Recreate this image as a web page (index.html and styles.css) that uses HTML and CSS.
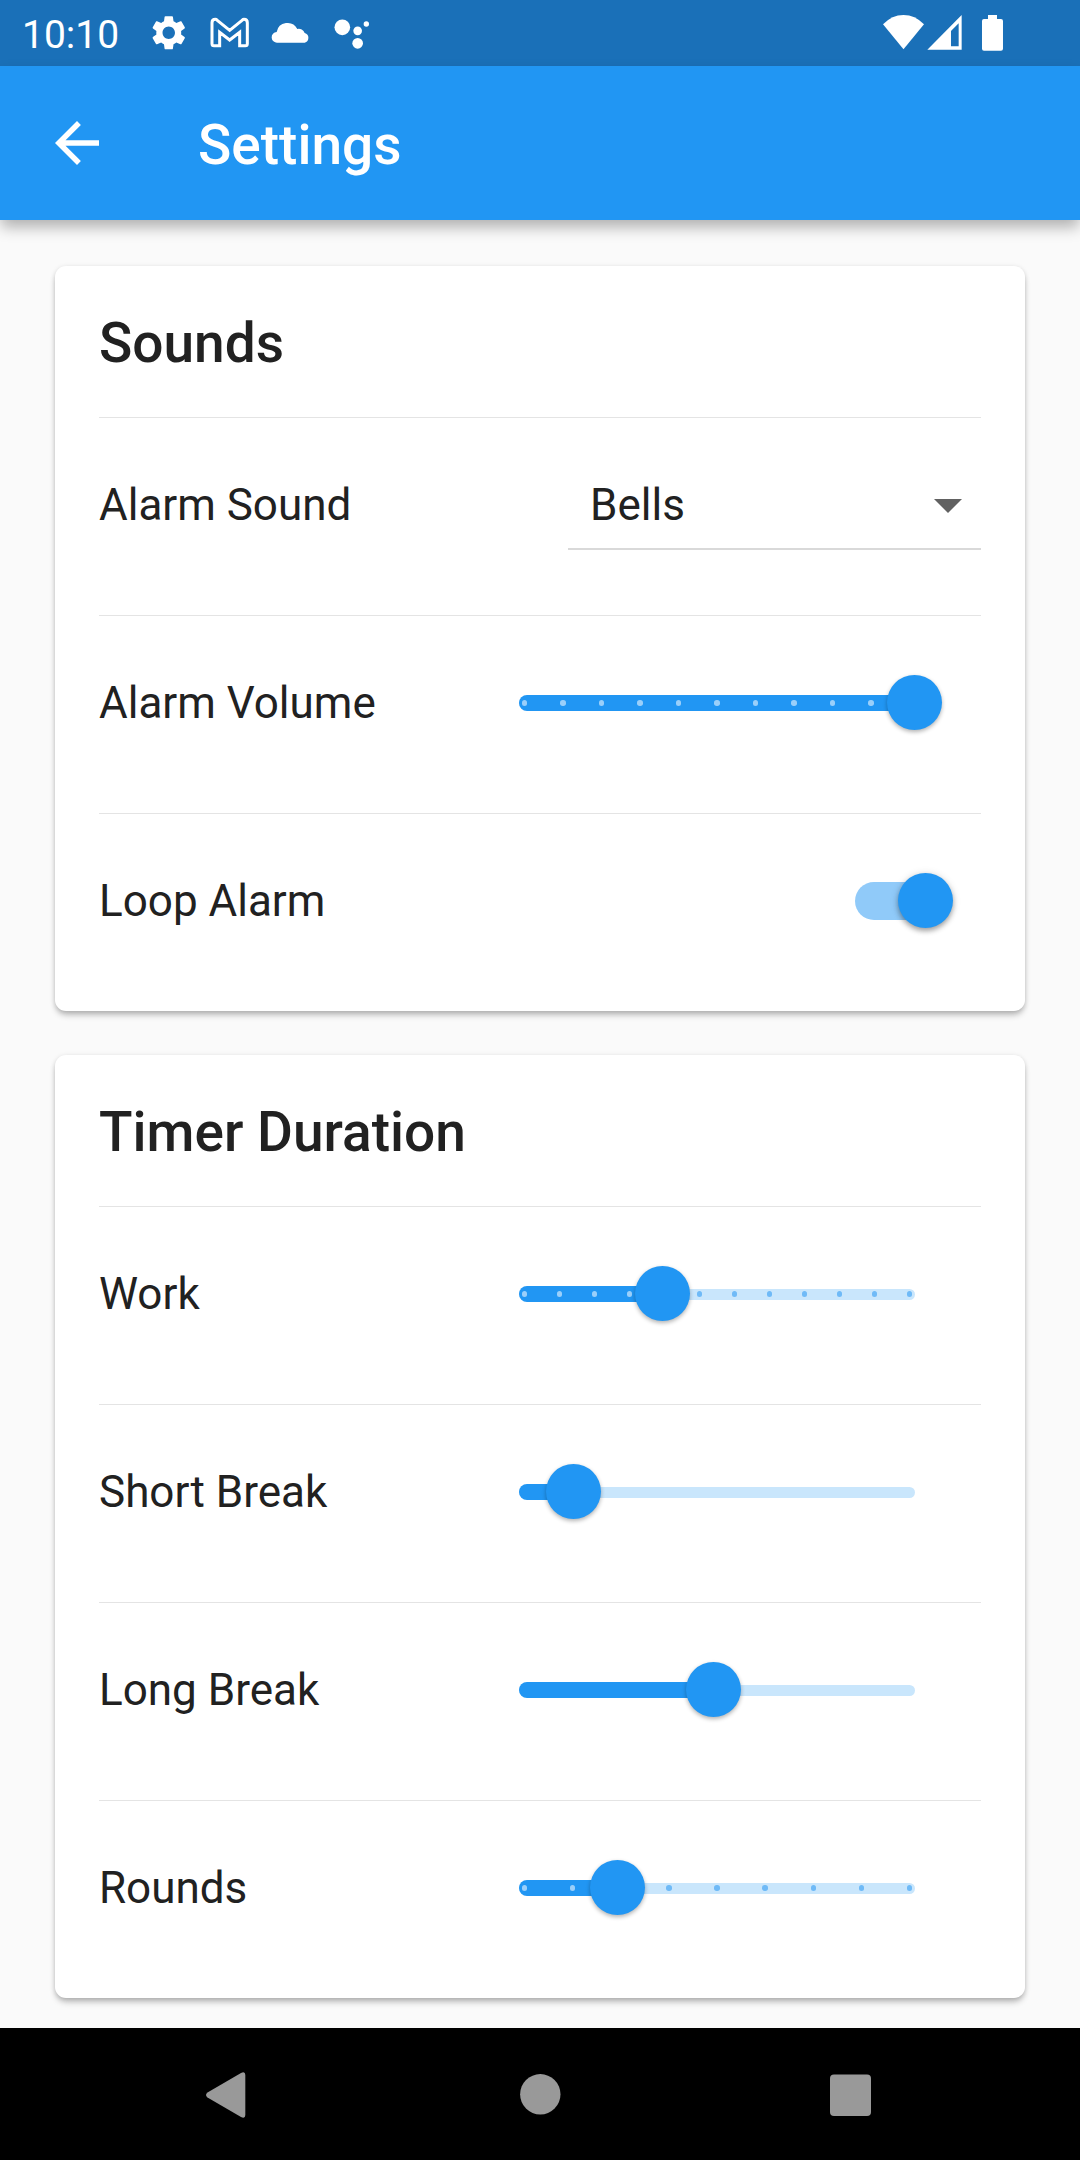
FILE: index.html
```html
<!DOCTYPE html>
<html lang="en">
<head>
<meta charset="utf-8">
<title>Settings</title>
<link rel="stylesheet" href="styles.css">
</head>
<body>
<div class="screen">
  <div class="status-bar">
    <span class="clock">10:10</span>
    <svg class="gear" viewBox="0 0 24 24"><path d="M19.14 12.94c.04-.3.06-.61.06-.94 0-.32-.02-.64-.07-.94l2.03-1.58c.18-.14.23-.41.12-.61l-1.92-3.32c-.12-.22-.37-.29-.59-.22l-2.39.96c-.5-.38-1.03-.7-1.62-.94l-.36-2.54c-.04-.24-.24-.41-.48-.41h-3.84c-.24 0-.43.17-.47.41l-.36 2.54c-.59.24-1.13.57-1.62.94l-2.39-.96c-.22-.08-.47 0-.59.22L2.74 8.87c-.12.21-.08.47.12.61l2.03 1.58c-.05.3-.09.63-.09.94s.02.64.07.94l-2.03 1.58c-.18.14-.23.41-.12.61l1.92 3.32c.12.22.37.29.59.22l2.39-.96c.5.38 1.03.7 1.62.94l.36 2.54c.05.24.24.41.48.41h3.84c.24 0 .44-.17.47-.41l.36-2.54c.59-.24 1.13-.56 1.62-.94l2.39.96c.22.08.47 0 .59-.22l1.92-3.32c.12-.22.07-.47-.12-.61l-2.01-1.58zM12 15.6c-1.98 0-3.6-1.62-3.6-3.6s1.62-3.6 3.6-3.6 3.6 1.62 3.6 3.6-1.62 3.6-3.6 3.6z"/></svg>
    <svg class="notices" viewBox="620 0 500 198">
      <path class="mail" d="M635 68Q635 58 645 58Q648 58 651 61L688 91L725 61Q728 58 731 58Q741 58 741 68V131Q741 137 735 137H718V97L688 120L658 97V137H641Q635 137 635 131Z"/>
      <path d="M831 128A16 16 0 0 1 829 96A33 33 0 0 1 891 87A19 19 0 0 1 913 99A15 15 0 0 1 913 128Z"/>
      <circle cx="1026" cy="82" r="23.5"/><circle cx="1072" cy="92.5" r="13"/><circle cx="1098" cy="72" r="8"/><circle cx="1072" cy="130" r="16"/>
    </svg>
    <svg class="system" viewBox="60 0 380 198">
      <path d="M130.500 148L69 73Q96 45 130.500 45T192 73Z"/>
      <path fill-rule="evenodd" d="M202 149L305 45V149ZM273 93V139H296V70Z"/>
      <path d="M384 57V45H411V57H423Q429 57 429 63V146Q429 152 423 152H372Q366 152 366 146V63Q366 57 372 57Z"/>
    </svg>
  </div>
  <header class="app-bar">
    <svg class="back" viewBox="0 0 24 24"><path d="M20 11H7.830l5.590-5.590L12 4l-8 8 8 8 1.410-1.410L7.830 13H20v-2z"/></svg>
    <h1 class="title">Settings</h1>
  </header>
  <main class="content">
    <section class="card">
      <h2 class="card-title">Sounds</h2>
      <div class="row">
        <span class="label">Alarm Sound</span>
        <div class="select"><span>Bells</span><svg class="caret" viewBox="0 0 28 14"><path d="M0 0H28L14 14Z"/></svg></div>
      </div>
      <div class="row">
        <span class="label">Alarm Volume</span>
        <div class="slider" style="--value:100%"><div class="fill"></div>
          <div class="ticks"><i class="on"></i><i class="on"></i><i class="on"></i><i class="on"></i><i class="on"></i><i class="on"></i><i class="on"></i><i class="on"></i><i class="on"></i><i class="on"></i><i class="on"></i></div>
          <div class="thumb"></div></div>
      </div>
      <div class="row">
        <span class="label">Loop Alarm</span>
        <div class="switch"><div class="knob"></div></div>
      </div>
    </section>
    <section class="card">
      <h2 class="card-title">Timer Duration</h2>
      <div class="row">
        <span class="label">Work</span>
        <div class="slider" style="--value:36.36%"><div class="fill"></div>
          <div class="ticks"><i class="on"></i><i class="on"></i><i class="on"></i><i class="on"></i><i class="on"></i><i></i><i></i><i></i><i></i><i></i><i></i><i></i></div>
          <div class="thumb"></div></div>
      </div>
      <div class="row">
        <span class="label">Short Break</span>
        <div class="slider" style="--value:13.79%"><div class="fill"></div><div class="thumb"></div></div>
      </div>
      <div class="row">
        <span class="label">Long Break</span>
        <div class="slider" style="--value:49.15%"><div class="fill"></div><div class="thumb"></div></div>
      </div>
      <div class="row">
        <span class="label">Rounds</span>
        <div class="slider" style="--value:25%"><div class="fill"></div>
          <div class="ticks"><i class="on"></i><i class="on"></i><i class="on"></i><i></i><i></i><i></i><i></i><i></i><i></i></div>
          <div class="thumb"></div></div>
      </div>
    </section>
  </main>
  <nav class="nav-bar">
    <svg width="44" height="46" viewBox="0 0 44 46"><path d="M1.500 20.500L35 1Q39.300 -1 39.300 3V43Q39.300 47 35 45L1.500 25.500Q-1.500 23 1.500 20.500Z"/></svg>
    <svg width="41" height="41" viewBox="0 0 41 41"><circle cx="20.300" cy="20.300" r="20.200"/></svg>
    <svg width="41" height="42" viewBox="0 0 41 42"><rect y="0.500" width="41" height="41.500" rx="4"/></svg>
  </nav>
</div>
</body>
</html>
```
FILE: styles.css
```css
* { box-sizing: border-box; }

body {
  margin: 0;
  font-family: Roboto, sans-serif;
  color: #212121;
}

svg { display: block; flex: none; }

.screen {
  display: flex;
  flex-direction: column;
  width: 1080px;
  height: 2160px;
  background: #fafafa;
  overflow: hidden;
}

.status-bar {
  display: flex;
  align-items: center;
  flex: none;
  height: 66px;
  padding-left: 22px;
  background: #1a70b8;
  color: #fff;
  fill: #fff;
}
.clock { width: 126px; font-size: 39px; line-height: 44px; padding-top: 3px; }
.gear { width: 41.500px; height: 41.500px; }
.notices { width: 166.670px; height: 66px; margin-left: 17.170px; }
.mail { fill: none; stroke: #fff; stroke-width: 9; }
.system { width: 126.670px; height: 66px; margin-left: auto; margin-right: 73.330px; }

.app-bar {
  display: flex;
  align-items: center;
  flex: none;
  height: 154px;
  padding-left: 44px;
  background: #2196f3;
  color: #fff;
  box-shadow: 0 8px 14px -1px rgba(0, 0, 0, .3);
}
.back { width: 66px; height: 66px; fill: #fff; }
.title { margin: 0 0 0 88px; padding-top: 4px; font-size: 55px; font-weight: 500; line-height: 64px; }

.content {
  display: flex;
  flex-direction: column;
  flex: 1;
  gap: 44px;
  padding: 46px 55px 0;
}
.card {
  padding: 0 44px;
  border-radius: 11px;
  background: #fff;
  box-shadow: 0 5px 6px -1px rgba(0, 0, 0, .24), 0 1px 5px rgba(0, 0, 0, .13);
}
.card-title {
  height: 151px;
  margin: 0;
  padding-top: 3px;
  font-size: 55px;
  font-weight: 500;
  line-height: 148px;
}
.row {
  display: flex;
  align-items: center;
  justify-content: space-between;
  height: 198px;
  padding-bottom: 23px;
  border-top: 1px solid #e4e4e4;
  font-size: 44px;
}

.select {
  display: flex;
  align-items: center;
  justify-content: space-between;
  width: 413px;
  height: 90px;
  padding: 2px 19px 0 22px;
  border-bottom: 2px solid #d9d9d9;
}
.caret { width: 28px; height: 14px; margin-top: 2px; fill: #616161; }

.slider {
  position: relative;
  width: 396px;
  height: 11px;
  margin-right: 66px;
  border-radius: 5.500px;
  background: #c9e6fc;
}
.fill {
  position: absolute;
  left: 0;
  top: -2.750px;
  width: var(--value);
  height: 16.500px;
  border-radius: 8.250px;
  background: #2196f3;
}
.ticks {
  position: absolute;
  inset: 0;
  display: flex;
  align-items: center;
  justify-content: space-between;
  padding: 0 2.750px;
}
.ticks i { width: 5.500px; height: 5.500px; border-radius: 50%; background: #6fbaf7; }
.ticks .on { background: #9acffa; }
.thumb {
  position: absolute;
  left: calc(var(--value) - 28px);
  top: -23px;
  width: 55px;
  height: 55px;
  border-radius: 50%;
  background: #2196f3;
  box-shadow: 0 2px 4px rgba(0, 0, 0, .3);
}

.switch {
  position: relative;
  width: 92px;
  height: 38.500px;
  margin-right: 34.500px;
  border-radius: 19.250px;
  background: #90caf9;
}
.knob {
  position: absolute;
  left: 43.800px;
  top: -8.500px;
  width: 55px;
  height: 55px;
  border-radius: 50%;
  background: #2196f3;
  box-shadow: 0 3px 5px rgba(0, 0, 0, .3), 0 1px 8px rgba(0, 0, 0, .14);
}

.nav-bar {
  display: flex;
  align-items: center;
  justify-content: space-between;
  flex: none;
  height: 132px;
  padding: 1px 209px 0 206px;
  background: #000;
  fill: #999;
}
```
